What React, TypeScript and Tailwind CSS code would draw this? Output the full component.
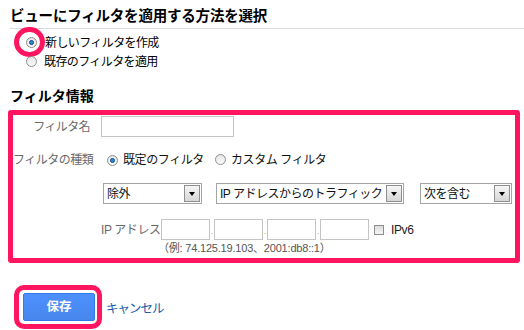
import * as React from "react";

function Radio({ checked = false }: { checked?: boolean }) {
  return (
    <span className="relative inline-flex h-[11px] w-[11px] shrink-0 items-center justify-center rounded-full border border-[#8e8e8e] bg-gradient-to-b from-[#e6e6e6] to-[#fafafa]">
      {checked && (
        <span className="h-[5px] w-[5px] rounded-full border border-[#0b4d8c] bg-[#2c86d6]" />
      )}
    </span>
  );
}

function FakeSelect({ label, width }: { label: string; width: string }) {
  return (
    <div className={`flex h-[21px] items-center justify-between border border-[#a5a5a5] bg-white pl-[3px] pr-[1px] ${width}`}>
      <span className="text-[12px] leading-none tracking-[-0.5px] text-[#111]">{label}</span>
      <span className="flex h-[17px] w-[16px] items-center justify-center border border-[#8f8f8f] bg-gradient-to-b from-[#f6f6f6] to-[#d6d6d6]">
        <span className="h-0 w-0 border-x-[3.5px] border-t-[4px] border-x-transparent border-t-black" />
      </span>
    </div>
  );
}

function IpBox() {
  return <div className="h-[21px] w-[49px] border border-[#c4c4c4] bg-white" />;
}

function Dot() {
  return <span className="flex h-[21px] w-[4px] items-end justify-center pb-[4px] text-[8px] leading-none text-[#b0803a]">.</span>;
}

export default function App() {
  return (
    <div className="h-[330px] w-[524px] overflow-hidden bg-white font-['Liberation_Sans','Noto_Sans_CJK_JP',sans-serif] text-[#222]">
      <div className="ml-[10px] h-[29px] border-b border-[#dcdcdc] pt-[7px]">
        <h1 className="text-[14.5px] font-bold leading-[18px] tracking-[-0.2px] text-black">ビューにフィルタを適用する方法を選択</h1>
      </div>

      <div className="ml-[26px] mt-[4px]">
        <label className="relative flex h-[19px] items-center gap-[8px]">
          <Radio checked />
          <span className="text-[12px] tracking-[-0.6px] text-black">新しいフィルタを作成</span>
          <span className="pointer-events-none absolute left-[-12px] top-[-6px] h-[30px] w-[31px] rounded-full border-[5px] border-[#ff1560]" />
        </label>
        <label className="flex h-[19px] items-center gap-[7px]">
          <Radio />
          <span className="text-[12px] tracking-[-0.6px] text-black">既存のフィルタを適用</span>
        </label>
      </div>

      <h2 className="ml-[10px] mt-[16px] text-[14px] font-bold leading-[18px] text-black">フィルタ情報</h2>

      <div className="ml-[8px] mt-[5px] h-[153px] w-[512px] rounded-[3px] border-[5px] border-[#ff1560] pt-[1px]">
        <div className="grid grid-cols-[77px_1fr] items-center gap-x-[11px]">
          <span className="text-right text-[12px] tracking-[-0.6px] text-[#6a6a6a]">フィルタ名</span>
          <div className="h-[21px] w-[133px] border border-[#c4c4c4] bg-white" />
        </div>

        <div className="mt-[11px] grid h-[20px] grid-cols-[77px_1fr] items-center gap-x-[11px]">
          <span className="whitespace-nowrap text-right text-[12px] tracking-[-0.5px] text-[#6a6a6a]">フィルタの種類</span>
          <div className="flex items-center pl-[6px]">
            <Radio checked />
            <span className="ml-[5px] text-[12px] tracking-[-0.4px] text-[#111]">既定のフィルタ</span>
            <span className="ml-[11px]">
              <Radio />
            </span>
            <span className="ml-[5px] text-[12px] tracking-[-0.4px] text-[#111]">カスタム フィルタ</span>
          </div>
        </div>

        <div className="mt-[15px] flex items-center pl-[90px]">
          <FakeSelect label="除外" width="w-[99px]" />
          <div className="ml-[14px]">
            <FakeSelect label="IP アドレスからのトラフィック" width="w-[188px]" />
          </div>
          <div className="ml-[16px]">
            <FakeSelect label="次を含む" width="w-[92px]" />
          </div>
        </div>

        <div className="mt-[15px] flex items-center pl-[88px]">
          <span className="w-[57px] whitespace-nowrap text-[12px] tracking-[-0.4px] text-[#6a6a6a]">IP アドレス</span>
          <div className="ml-[3px] flex items-center">
            <IpBox />
            <Dot />
            <IpBox />
            <Dot />
            <IpBox />
            <Dot />
            <IpBox />
            <span className="ml-[5px] h-[10px] w-[10px] border border-[#8e8e8e] bg-gradient-to-b from-[#dcdcdc] to-[#f6f6f6]" />
            <span className="ml-[7px] text-[12px] tracking-[-0.4px] text-[#222]">IPv6</span>
          </div>
        </div>

        <p className="ml-[145px] mt-[2px] text-[11px] leading-[13px] tracking-[-0.2px] text-[#555]">（例: 74.125.19.103、2001:db8::1）</p>
      </div>

      <div className="ml-[23px] mt-[30px] flex items-center gap-[11px]">
        <button className="relative h-[28px] w-[72px] rounded-[2px] border border-[#3079ed] bg-gradient-to-b from-[#4d90fe] to-[#4787ed] text-[12.5px] font-bold text-white">
          保存
          <span className="pointer-events-none absolute left-[-10px] top-[-9px] h-[44px] w-[88px] rounded-[10px] border-[5px] border-[#ff1560]" />
        </button>
        <a className="mt-[5px] text-[12.5px] tracking-[-1px] text-[#1a5aa6]">キャンセル</a>
      </div>
    </div>
  );
}
